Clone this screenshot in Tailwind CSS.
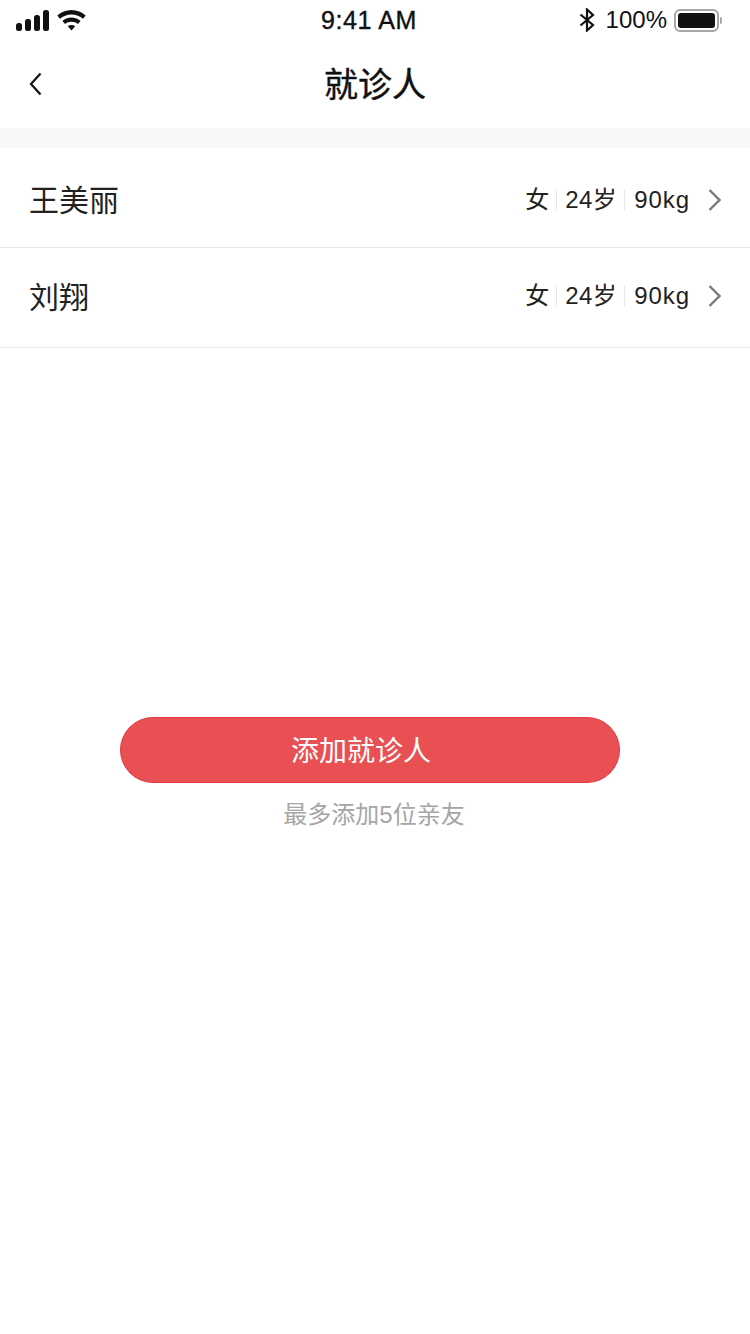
<!DOCTYPE html>
<html lang="zh-CN">

<head>
    <meta charset="UTF-8">
    <meta name="viewport" content="width=device-width, initial-scale=1.0">
    <title>就诊人</title>
    <script src="https://cdn.jsdelivr.net/npm/@tailwindcss/browser@4"></script>
</head>

<body class="bg-white text-[#111] font-['Liberation_Sans','Noto_Sans_CJK_SC',sans-serif]">
    <div class="w-[750px] h-[1334px] overflow-hidden flex flex-col">
        <!-- Status bar -->
        <div class="h-[40px] flex items-center justify-between pl-[16px] pr-[28px] text-[25px] leading-none">
            <div class="flex items-center gap-[8px] w-[200px]">
                <svg width="33" height="21" viewBox="0 0 33 21" fill="#111">
                    <rect x="0" y="13" width="6" height="8" rx="2.500"/>
                    <rect x="9" y="9" width="6" height="12" rx="2.500"/>
                    <rect x="18" y="5" width="6" height="16" rx="2.500"/>
                    <rect x="27" y="0" width="6" height="21" rx="2.500"/>
                </svg>
                <svg width="29" height="21" viewBox="0 0 29 21" fill="#111">
                    <path d="M14.500 0C9 0 4 2.200 0.300 5.600L3 8.800C6 6 10 4.400 14.500 4.400S23 6 26 8.800L28.700 5.600C25 2.200 20 0 14.500 0Z"/>
                    <path d="M14.500 7.400C11 7.400 7.800 8.700 5.400 10.900L8.100 14C9.900 12.500 12 11.700 14.500 11.700S19.100 12.500 20.900 14L23.600 10.900C21.200 8.700 18 7.400 14.500 7.400Z"/>
                    <path d="M14.500 15C13 15 11.800 15.400 10.800 16.200L14.500 20.500L18.200 16.200C17.200 15.400 16 15 14.500 15Z"/>
                </svg>
            </div>
            <div class="tracking-[0.6px] [-webkit-text-stroke:0.4px_#111]">9:41 AM</div>
            <div class="flex items-center justify-end w-[200px]">
                <svg class="mr-[11px]" width="16" height="24" viewBox="0 0 16 24" fill="none" stroke="#111" stroke-width="2.2">
                    <path d="M1.500 6.500L14 17L8 22.500V1.500L14 7L1.500 17.500"/>
                </svg>
                <span class="mr-[7px] text-[24px]">100%</span>
                <div class="w-[45px] h-[23px] rounded-[6px] border-2 border-[#a6a6a6] p-[2px]">
                    <div class="w-full h-full rounded-[3px] bg-[#111]"></div>
                </div>
                <div class="ml-[1px] w-[2px] h-[7px] rounded-r-[2px] bg-[#a6a6a6]"></div>
            </div>
        </div>

        <!-- Nav -->
        <header class="relative h-[88px] flex items-center justify-center pt-[2px]">
            <svg class="absolute left-[29px] top-[32px]" width="13" height="24" viewBox="0 0 13 24" fill="none" stroke="#111" stroke-width="2.200">
                <path d="M11.500 1.500L2 12L11.500 22.500"/>
            </svg>
            <h1 class="text-[34px] leading-none font-normal text-[#111] [-webkit-text-stroke:0.4px_#111]">就诊人</h1>
        </header>

        <div class="h-[20px] bg-[#f7f7f9]"></div>

        <!-- Patients -->
        <ul>
            <li class="h-[100px] flex items-center justify-between pt-[5px] pl-[29px] pr-[29px] border-b border-[#e6e6e6]">
                <span class="text-[30px] text-[#222]">王美丽</span>
                <div class="flex items-center text-[24px] leading-none text-[#222]">
                    <span>女</span>
                    <span class="w-px h-[20px] bg-[#e6e6e6] ml-[7px] mr-[8px]"></span>
                    <span class="tracking-[0.5px]">24岁</span>
                    <span class="w-px h-[20px] bg-[#e6e6e6] ml-[7px] mr-[9px]"></span>
                    <span class="tracking-[0.9px]">90kg</span>
                    <svg class="ml-[18px]" width="13" height="22" viewBox="0 0 13 22" fill="none" stroke="#7a7a7a" stroke-width="2.400">
                        <path d="M1.500 1L11.500 11L1.500 21"/>
                    </svg>
                </div>
            </li>
            <li class="h-[100px] flex items-center justify-between pb-[3px] pl-[29px] pr-[29px] border-b border-[#e6e6e6]">
                <span class="text-[30px] text-[#222] pt-[2px]">刘翔</span>
                <div class="flex items-center text-[24px] leading-none text-[#222]">
                    <span>女</span>
                    <span class="w-px h-[20px] bg-[#e6e6e6] ml-[7px] mr-[8px]"></span>
                    <span class="tracking-[0.5px]">24岁</span>
                    <span class="w-px h-[20px] bg-[#e6e6e6] ml-[7px] mr-[9px]"></span>
                    <span class="tracking-[0.9px]">90kg</span>
                    <svg class="ml-[18px]" width="13" height="22" viewBox="0 0 13 22" fill="none" stroke="#7a7a7a" stroke-width="2.400">
                        <path d="M1.500 1L11.500 11L1.500 21"/>
                    </svg>
                </div>
            </li>
        </ul>

        <!-- Add button -->
        <div class="mt-[369px] flex flex-col items-center">
            <button class="self-start ml-[120px] w-[500px] h-[66px] rounded-full bg-[#e95053] border border-[#e23a40] text-white text-[28px] leading-none pt-[3px] pr-[18px]">添加就诊人</button>
            <p class="mt-[18px] pr-[2px] text-[24px] leading-[28px] text-[#a6a6a6]">最多添加5位亲友</p>
        </div>
    </div>
</body>

</html>
